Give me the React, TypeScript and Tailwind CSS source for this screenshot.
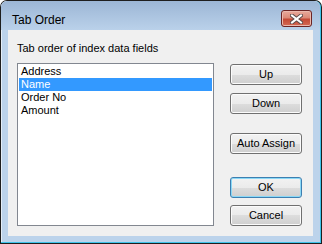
import React from "react";

const btnBase =
  "h-[21px] w-[72px] rounded-[3px] border text-[11px] leading-[13px] text-black flex items-center justify-center bg-[linear-gradient(to_bottom,#f2f2f2_0%,#ebebeb_50%,#dddddd_50%,#cfcfcf_100%)]";

function Btn({ label, def, className }: { label: string; def?: boolean; className?: string }) {
  return (
    <div
      className={
        btnBase +
        " " +
        (def
          ? "border-[#3c7fb1] shadow-[inset_0_0_0_1px_#8ad8f6]"
          : "border-[#707070] shadow-[inset_0_0_0_1px_#fbfbfb]") +
        " " +
        (className ?? "")
      }
    >
      {label}
    </div>
  );
}

export default function App() {
  const items = ["Address", "Name", "Order No", "Amount"];
  return (
    <div
      className="w-[322px] h-[244px] bg-[#1e1e1e] rounded-t-[7px] p-px"
      style={{ fontFamily: '"Liberation Sans", Arial, sans-serif' }}
    >
      <div className="flex h-full flex-col rounded-t-[6px] bg-[#bcd3eb] border-r border-b border-[#3fc3ea] shadow-[inset_1px_1px_0_#e4eef8]">
        {/* title bar */}
        <div className="flex h-[29px] items-start justify-between rounded-t-[6px] bg-gradient-to-b from-[#9cb6d5] to-[#bad1ea] pl-[11px] pr-[8px] pt-[9px]">
          <span className="text-[12px] leading-[16px] mt-[2px] text-black">Tab Order</span>
          <div className="flex h-[17px] w-[31px] items-center justify-center rounded-[3px] border border-[#6b2424] bg-[linear-gradient(to_bottom,#e8aa9c_0%,#dc8a78_45%,#c44a36_55%,#d46a55_100%)] shadow-[inset_0_0_0_1px_#eab9ae]">
            <svg width="13" height="10" viewBox="0 0 13 10">
              <path d="M2 1.5 L11 8.5 M11 1.5 L2 8.5" stroke="#5a4a4a" strokeWidth="4" strokeLinecap="square" />
              <path d="M2 1.5 L11 8.5 M11 1.5 L2 8.5" stroke="#ffffff" strokeWidth="2" strokeLinecap="square" />
            </svg>
          </div>
        </div>
        {/* client area */}
        <div className="mx-[7px] h-[206px] bg-[#f0f0f0] pl-[9px] pt-[12px] flex">
          <div className="flex flex-col w-[197px]">
            <div className="text-[11px] leading-[13px] text-black whitespace-nowrap">Tab order of index data fields</div>
            <div className="mt-[8px] h-[163px] w-[197px] border border-[#828790] bg-white p-px">
              {items.map((it, i) => (
                <div
                  key={it}
                  className={
                    "h-[13px] pl-[2px] text-[11px] leading-[13px] whitespace-nowrap " +
                    (i === 1 ? "bg-[#3399ff] text-white" : "text-black")
                  }
                >
                  {it}
                </div>
              ))}
            </div>
          </div>
          <div className="ml-[16px] mt-[22px] flex flex-col">
            <Btn label="Up" />
            <Btn label="Down" className="mt-[8px]" />
            <Btn label="Auto Assign" className="mt-[19px]" />
            <Btn label="OK" def className="mt-[23px]" />
            <Btn label="Cancel" className="mt-[7px]" />
          </div>
        </div>
      </div>
    </div>
  );
}
